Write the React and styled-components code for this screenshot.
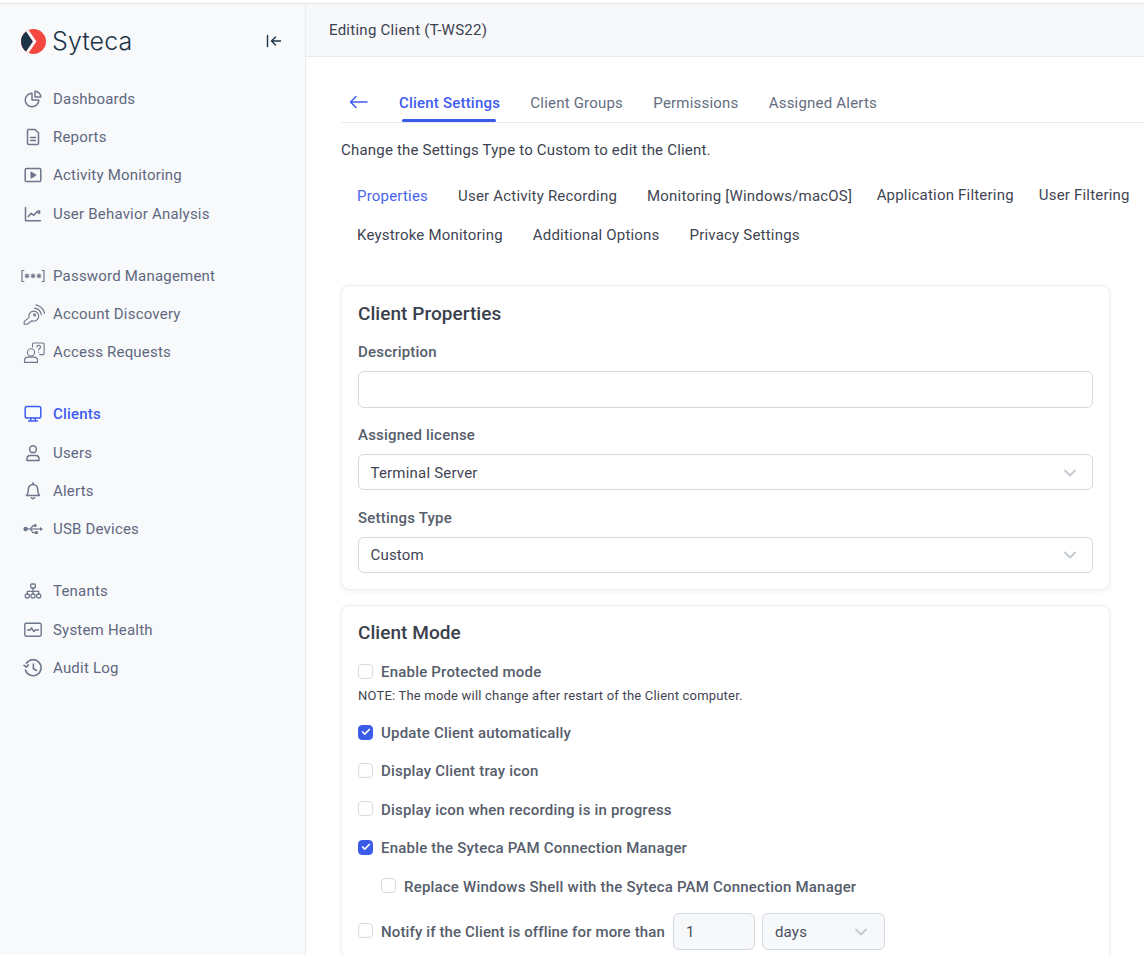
import React from 'react';
import styled, { createGlobalStyle } from 'styled-components';
import { ChevronDown, Check } from 'lucide-react';

const Global = createGlobalStyle`
  html, body { margin: 0; padding: 0; height: 955px; overflow: hidden; background: #fff; }
  body { font-family: Roboto, "Liberation Sans", sans-serif; font-size: 15px; letter-spacing: .2px; }
  * { box-sizing: border-box; }
`;

const Page = styled.div`
  width: 1144px; height: 955px; overflow: hidden; display: flex;
  border-top: 1px solid #e4e6ea; margin-top: 3px; background: #fff;
`;
const Sidebar = styled.aside`
  width: 306px; flex: none; background: #f8f9fb; border-right: 1px solid #e9ebef;
  padding-top: 18px; display: flex; flex-direction: column;
`;
const Brand = styled.div`
  height: 38px; display: flex; align-items: center; padding: 0 23px 0 21px; margin-bottom: 19.4px;
`;
const Wordmark = styled.span`
  font-family: Inter, sans-serif; font-size: 25px; font-weight: 300; color: #1d3548;
  margin-left: 6px; flex: 1; line-height: 1; letter-spacing: .1px;
`;
const NavGroup = styled.nav`
  display: flex; flex-direction: column; margin-bottom: 23.5px;
`;
const NavItem = styled.a`
  height: 38.4px; display: flex; align-items: center; padding-left: 21px; gap: 8px;
  color: ${p => (p.$active ? '#3f5cf0' : '#5e6880')};
  font-weight: ${p => (p.$active ? 500 : 400)};
  font-size: 15px;
`;
const IconSlot = styled.span`
  width: 24px; height: 24px; display: flex; align-items: center; justify-content: center; flex: none;
`;
const Main = styled.main`
  flex: 1; min-width: 0; display: flex; flex-direction: column;
`;
const Header = styled.header`
  height: 53px; flex: none; background: #f7f8fa; border-bottom: 1px solid #e9ebef;
  display: flex; align-items: center; padding-left: 23px; color: #3c4250; font-size: 15px; letter-spacing: .26px;
`;
const Content = styled.div`
  padding: 27px 0 0 35px;
`;
const TabBar = styled.div`
  height: 39px; display: flex; align-items: flex-start; border-bottom: 1px solid #e9ebef;
  padding-left: 8px;
`;
const BackArrow = styled.span`
  width: 50px; height: 36px; display: flex; align-items: center; color: #3f5cf0; flex: none;
`;
const Tab = styled.a`
  position: relative; height: 38px; padding-top: 10px; margin-right: 30.3px; line-height: 18px; font-size: 15px;
  color: ${p => (p.$active ? '#3f5cf0' : '#646d80')};
  font-weight: ${p => (p.$active ? 500 : 400)};
`;
const TabLine = styled.span`
  position: absolute; left: 3px; right: 4px; bottom: 0; height: 3px; background: #3a5ce9; border-radius: 2px;
`;
const Hint = styled.p`
  margin: 0; height: 18px; line-height: 18px; margin-top: 18px; color: #3c4250; font-size: 15px;
`;
const SubTabs = styled.div`
  display: flex; flex-direction: column; gap: 21px; margin: 28px 0 41px 16px;
`;
const SubRow = styled.div`
  display: flex; height: 18px;
`;
const SubTab = styled.a`
  line-height: 18px; font-size: 15px; white-space: nowrap;
  margin-right: ${p => p.$gap || 30}px;
  color: ${p => (p.$active ? '#4a64ee' : '#3f4552')};
  ${p => p.$raised && 'transform: translateY(-1px);'}
`;
const Card = styled.section`
  width: 769px; background: #fff; border: 1px solid #eceef1; border-radius: 8px;
  box-shadow: 0 1px 5px rgba(30, 40, 60, .07); padding: ${p => p.$top || 17}px 16px 16px; margin-bottom: 15px;
`;
const CardTitle = styled.h2`
  margin: 0; font-size: 19px; line-height: 22px; font-weight: 500; color: #3a404c; letter-spacing: .05px;
`;
const FieldLabel = styled.label`
  display: block; font-size: 15px; font-weight: 500; color: #565d6b; line-height: 18px;
  margin-top: ${p => p.$top || 18}px; margin-bottom: 10px;
`;
const TextField = styled.div`
  height: 37px; border: 1px solid #d3d8e1; border-radius: 6px; background: #fff;
`;
const SelectField = styled.div`
  height: 36px; border: 1px solid #d3d8e1; border-radius: 6px; background: #fff;
  display: flex; align-items: center; justify-content: space-between;
  padding: ${p => (p.$nudge ? 1 : 0)}px 12px 0 11.5px;
  color: #3f4552; font-size: 15px;
  svg { color: #c5cad3; }
`;
const CheckRow = styled.div`
  display: flex; align-items: center; gap: 8px; height: 20px;
  margin-top: ${p => p.$top ?? 18.4}px;
  margin-left: ${p => p.$indent || 0}px;
`;
const Box = styled.span`
  width: 15px; height: 15px; margin-bottom: 2px; border-radius: 4px; flex: none; display: flex; align-items: center; justify-content: center;
  background: ${p => (p.$on ? '#3a5ce9' : '#fff')};
  border: 1px solid ${p => (p.$on ? '#3a5ce9' : '#d6dae2')};
  color: #fff;
`;
const CheckText = styled.span`
  font-weight: 500; font-size: 15px; color: #565d6b; white-space: nowrap;
  ${p => p.$tight && 'letter-spacing: .13px;'}
`;
const Note = styled.p`
  margin: 6px 0 0; font-size: 13px; line-height: 16px; color: #3f4552;
`;
const SmallInput = styled.div`
  width: 82px; height: 37px; flex: none; border: 1px solid #d3d8e1; border-radius: 6px; background: #f7f8fa;
  display: flex; align-items: center; padding-left: 12px; color: #4a5060;
`;
const SmallSelect = styled.div`
  width: 123px; height: 37px; flex: none; border: 1px solid #d3d8e1; border-radius: 6px; background: #f7f8fa;
  display: flex; align-items: center; justify-content: space-between; padding: 0 13px 0 12px; color: #4a5060;
  margin-left: -1px;
  svg { color: #c5cad3; }
`;

const S = ({ children, w = 20, h = 20, vb = '0 0 20 20', c = '#6d768a', sw = 1.5 }) => (
  <svg width={w} height={h} viewBox={vb} fill="none" stroke={c} strokeWidth={sw} strokeLinecap="round" strokeLinejoin="round">{children}</svg>
);

const icons = {
  pie: <S><path d="M9 4.2a6.8 6.8 0 1 0 6.8 6.8H9z" /><path d="M12 2.2a6 6 0 0 1 5.8 5.8H12z" /></S>,
  doc: <S><path d="M5 2.5h7l3.5 3.5v10.2a1.3 1.3 0 0 1-1.3 1.3H5.8a1.3 1.3 0 0 1-1.3-1.3V3.8a1.3 1.3 0 0 1 .5-1.3z" /><path d="M7.5 10.5h5M7.5 13.5h5" /></S>,
  play: <S><rect x="2.2" y="3.6" width="15.6" height="13" rx="1.4" /><path d="M8.2 7.4v5.4l4.4-2.7z" fill="#6d768a" /></S>,
  chart: <S><path d="M2.5 3.5v13.3h15" /><path d="M5.2 12.5l3-3.2 2.6 2 2.8-3.2 2.6 1" /><path d="M14.6 6.9h2v2" /></S>,
  pass: <svg width="24" height="14" viewBox="0 0 24 14" fill="none" stroke="#6d768a" strokeWidth="1.1" strokeLinecap="round"><path d="M2.8 1.5H1v11h1.8M21.2 1.5H23v11h-1.8" strokeWidth="1.2" /><path d="M6 4.8v4.2M4.2 5.8l3.6 2.2M7.8 5.8L4.2 8M12 4.8v4.2M10.2 5.8l3.6 2.2M13.8 5.8L10.2 8M18 4.8v4.2M16.2 5.8l3.6 2.2M19.8 5.8L16.2 8" /></svg>,
  key: <S w={23} h={23} vb="0 0 23 23" sw={1.15}><path d="M2.2 21.2v-2.8L7 14.6a5 5 0 1 1 3 3.2L5 21.2z" /><circle cx="12.6" cy="11.8" r="1" /><path d="M12.5 5.1a8 8 0 0 1 6.9 6.9M14 1.9a11.5 11.5 0 0 1 8.6 8.6" /></S>,
  req: <S w={23} h={23} vb="0 0 23 23" sw={1.1}><circle cx="9" cy="11.4" r="3.6" /><path d="M2.5 21.4v-1.8a3.5 3.5 0 0 1 3.5-3.5h6a3.5 3.5 0 0 1 3.5 3.5v1.8z" /><path d="M10.5 6V3a1 1 0 0 1 1-1h9.6a1 1 0 0 1 1 1v9.6a1 1 0 0 1-1 1h-3.4" /><path d="M14.9 6a1.8 1.8 0 1 1 2.7 1.6c-.7.4-.9.8-.9 1.5M16.7 11.2v.1" /></S>,
  monitor: <S w={18} h={18} vb="0 0 18 18" c="#3f5cf0"><rect x="1.2" y="1.6" width="15.6" height="11.4" rx="1.8" /><path d="M7 13.2l-.5 2.6M11 13.2l.5 2.6M4.6 16h8.8" /></S>,
  user: <S><circle cx="10" cy="6.2" r="3.4" /><path d="M4 17.5v-1.7a3.3 3.3 0 0 1 3.3-3.3h5.4a3.3 3.3 0 0 1 3.3 3.3v1.7z" /></S>,
  bell: <S><path d="M10 3.4a4.6 4.6 0 0 0-4.6 4.6c0 4.3-1.9 6.6-1.9 6.6h13s-1.9-2.3-1.9-6.6A4.6 4.6 0 0 0 10 3.4z" /><path d="M10 1.8v1.4M8.4 16.7a1.8 1.8 0 0 0 3.2 0" /></S>,
  usb: <svg width="20" height="14" viewBox="0 0 20 14" fill="#6d768a" stroke="none"><circle cx="2.6" cy="7" r="2.2" /><path d="M4 6.4h14v1.2H4z" /><path d="M20 7l-3-1.9v3.8z" /><path d="M7 6.6l2.6-3.6h1.8v1.2h-1.2L8.4 7zM8.2 7l2 3h2v1.2H9.6L7 7.4z" /><circle cx="12.2" cy="3.6" r="1.5" /><rect x="12" y="9.2" width="2.8" height="2.8" /></svg>,
  net: <S sw={1.3}><rect x="7.7" y="3" width="4.6" height="4" rx="1" /><rect x="2.2" y="13" width="4.2" height="4" rx="1.8" /><rect x="7.9" y="13" width="4.2" height="4" rx="1.8" /><rect x="13.6" y="13" width="4.2" height="4" rx="1.8" /><path d="M10 7v6M4.3 13v-2.6h11.4V13" /></S>,
  pulse: <S sw={1.4}><rect x="1.8" y="3.2" width="16.4" height="13" rx="1.4" /><path d="M4.6 10h2.6l1.4-2.2 2.2 3.8 1.5-1.6h3.2" /></S>,
  history: <S sw={1.6}><path d="M3.4 5.2A8 8 0 1 1 2.4 12" /><path d="M1 7.3l2.4 1.9 2-2.4" /><path d="M10.4 6v4.7l3 1.8" /></S>,
};

const nav = [
  [['pie', 'Dashboards'], ['doc', 'Reports'], ['play', 'Activity Monitoring'], ['chart', 'User Behavior Analysis']],
  [['pass', 'Password Management'], ['key', 'Account Discovery'], ['req', 'Access Requests']],
  [['monitor', 'Clients', true], ['user', 'Users'], ['bell', 'Alerts'], ['usb', 'USB Devices']],
  [['net', 'Tenants'], ['pulse', 'System Health'], ['history', 'Audit Log']],
];

const Logo = () => (
  <svg width="25" height="25" viewBox="0 0 25 25">
    <circle cx="12.5" cy="12.5" r="12.5" fill="#f4473f" />
    <path d="M5.2 2.4A12.5 12.5 0 0 0 5.2 22.6L12 12.5z" fill="#1b3448" />
    <path d="M5.2 2.4L12 12.5 5.2 22.6 7.6 24 15.4 12.5 7.6 1z" fill="#f8f9fb" />
  </svg>
);

const Cb = ({ on }) => <Box $on={on}>{on && <Check size={10} strokeWidth={4} />}</Box>;
const Chevron = () => <ChevronDown size={20} strokeWidth={2.4} />;

export default function App() {
  return (
    <>
      <Global />
      <Page>
        <Sidebar>
          <Brand>
            <Logo />
            <Wordmark>Syteca</Wordmark>
            <svg width="16" height="14" viewBox="0 0 16 14" fill="none" stroke="#1d3548" strokeWidth="1.4" strokeLinecap="round" strokeLinejoin="round"><path d="M1.5 1.5v11M14.5 7H6M9.5 3L5.5 7l4 4" /></svg>
          </Brand>
          {nav.map((g, i) => (
            <NavGroup key={i}>
              {g.map(([ic, label, active]) => (
                <NavItem key={label} $active={active}>
                  <IconSlot>{icons[ic]}</IconSlot>
                  {label}
                </NavItem>
              ))}
            </NavGroup>
          ))}
        </Sidebar>
        <Main>
          <Header>Editing Client (T-WS22)</Header>
          <Content>
            <TabBar>
              <BackArrow>
                <svg width="19" height="14" viewBox="0 0 19 14" fill="none" stroke="currentColor" strokeWidth="1.5" strokeLinecap="round" strokeLinejoin="round"><path d="M18 7H1.5M7 1.5L1.5 7 7 12.5" /></svg>
              </BackArrow>
              <Tab $active>Client Settings<TabLine /></Tab>
              <Tab>Client Groups</Tab>
              <Tab>Permissions</Tab>
              <Tab>Assigned Alerts</Tab>
            </TabBar>
            <Hint>Change the Settings Type to Custom to edit the Client.</Hint>
            <SubTabs>
              <SubRow>
                <SubTab $active>Properties</SubTab>
                <SubTab>User Activity Recording</SubTab>
                <SubTab $gap={24.5}>Monitoring [Windows/macOS]</SubTab>
                <SubTab $gap={25} $raised>Application Filtering</SubTab>
                <SubTab $raised>User Filtering</SubTab>
              </SubRow>
              <SubRow>
                <SubTab>Keystroke Monitoring</SubTab>
                <SubTab>Additional Options</SubTab>
                <SubTab>Privacy Settings</SubTab>
              </SubRow>
            </SubTabs>
            <Card>
              <CardTitle>Client Properties</CardTitle>
              <FieldLabel $top={18}>Description</FieldLabel>
              <TextField />
              <FieldLabel>Assigned license</FieldLabel>
              <SelectField $nudge>Terminal Server<Chevron /></SelectField>
              <FieldLabel $top={19}>Settings Type</FieldLabel>
              <SelectField>Custom<Chevron /></SelectField>
            </Card>
            <Card $top={16}>
              <CardTitle>Client Mode</CardTitle>
              <CheckRow $top={18}><Cb /><CheckText>Enable Protected mode</CheckText></CheckRow>
              <Note>NOTE: The mode will change after restart of the Client computer.</Note>
              <CheckRow $top={19}><Cb on /><CheckText>Update Client automatically</CheckText></CheckRow>
              <CheckRow><Cb /><CheckText>Display Client tray icon</CheckText></CheckRow>
              <CheckRow><Cb /><CheckText>Display icon when recording is in progress</CheckText></CheckRow>
              <CheckRow><Cb on /><CheckText>Enable the Syteca PAM Connection Manager</CheckText></CheckRow>
              <CheckRow $indent={23}><Cb /><CheckText>Replace Windows Shell with the Syteca PAM Connection Manager</CheckText></CheckRow>
              <CheckRow $top={25}>
                <Cb /><CheckText $tight>Notify if the Client is offline for more than</CheckText>
                <SmallInput>1</SmallInput>
                <SmallSelect>days<Chevron /></SmallSelect>
              </CheckRow>
            </Card>
          </Content>
        </Main>
      </Page>
    </>
  );
}
